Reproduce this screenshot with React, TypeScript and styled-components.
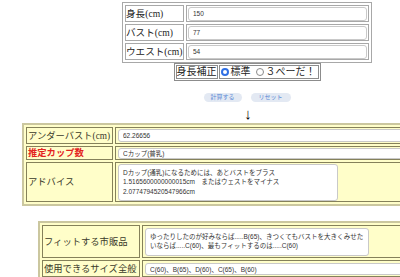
import styled, { createGlobalStyle } from "styled-components";

const GlobalStyle = createGlobalStyle`
  html, body {
    margin: 0;
    padding: 0;
    overflow: hidden;
    background: #ffffff;
  }
  body {
    font-family: "Liberation Serif", "Noto Sans CJK JP", serif;
  }
`;

const Page = styled.div`
  width: 494px;
  padding-top: 2px;
`;

const InputTable = styled.table`
  margin: 0 auto;
  width: 250px;
  border: 1px solid #a8a8a8;
  border-spacing: 2px;
`;

const GreyLabel = styled.td`
  width: 57px;
  height: 15px;
  padding: 0;
  border: 1px solid #a8a8a8;
  font-size: 9.6px;
  line-height: 15px;
  color: #222;
  white-space: nowrap;
`;

const GreyCell = styled.td`
  padding: 0 1px;
  border: 1px solid #a8a8a8;
`;

const Field = styled.input<{ $h?: number }>`
  display: block;
  box-sizing: border-box;
  width: 100%;
  height: ${(p) => p.$h ?? 14}px;
  padding: 0 4px;
  border: 1px solid #c9c9c9;
  border-radius: 3px;
  background: #fff;
  font: 6.5px "Liberation Sans", "Noto Sans CJK JP", sans-serif;
  color: #333;
  outline: none;
`;

const Memo = styled.textarea<{ $w: number; $h: number }>`
  display: block;
  box-sizing: border-box;
  width: ${(p) => p.$w}px;
  height: ${(p) => p.$h}px;
  padding: 3px 4px;
  border: 1px solid #c9c9c9;
  border-radius: 3px;
  background: #fff;
  font: 6.5px/9.5px "Liberation Sans", "Noto Sans CJK JP", sans-serif;
  color: #333;
  resize: none;
  overflow: hidden;
  outline: none;
`;

const RadioTable = styled.table`
  margin: 0 auto;
  border: 1px solid #8c8c8c;
  border-spacing: 1px;
`;

const RadioLabel = styled.td`
  height: 12px;
  padding: 0;
  border: 1px solid #8c8c8c;
  font-size: 10px;
  line-height: 12px;
  color: #222;
  white-space: nowrap;
`;

const RadioCell = styled.td`
  padding: 0 2px 0 1px;
  border: 1px solid #8c8c8c;
  font-size: 10px;
  line-height: 12px;
  color: #222;
  white-space: nowrap;
`;

const RadioGroup = styled.div`
  display: flex;
  align-items: center;
  gap: 2px;
`;

const RadioDot = styled.span<{ $on?: boolean }>`
  box-sizing: border-box;
  width: 8px;
  height: 8px;
  border-radius: 50%;
  border: ${(p) => (p.$on ? "2.5px solid #2f6fe4" : "1px solid #8a8a8a")};
  background: #fff;
  margin-left: ${(p) => (p.$on ? 0 : 3)}px;
`;

const ButtonRow = styled.div`
  display: flex;
  justify-content: center;
  gap: 9px;
  margin-top: 12px;
`;

const PillButton = styled.button<{ $w: number }>`
  width: ${(p) => p.$w}px;
  height: 9px;
  padding: 0;
  border: none;
  border-radius: 5px;
  background: #e3e9f3;
  color: #5d8ad6;
  font: 6px/9px "Liberation Sans", "Noto Sans CJK JP", sans-serif;
`;

const Arrow = styled.div`
  text-align: center;
  font: 15px/15px "Liberation Serif", "DejaVu Sans", serif;
  color: #000;
  margin-top: 5px;
  padding-left: 2px;
`;

const YellowTable = styled.table<{ $w: number; $top: number }>`
  width: ${(p) => p.$w}px;
  margin: ${(p) => p.$top}px auto 0;
  background: #fffec9;
  border: 2px solid #cbc79f;
  border-spacing: 2px;
`;

const YellowLabel = styled.td<{ $w: number; $h: number; $red?: boolean }>`
  width: ${(p) => p.$w}px;
  height: ${(p) => p.$h}px;
  padding: 0 1px;
  border: 1px solid #85815a;
  font-size: 9.3px;
  line-height: 12px;
  color: ${(p) => (p.$red ? "#e3231f" : "#3a3a2a")};
  font-weight: ${(p) => (p.$red ? 700 : 400)};
  white-space: nowrap;
`;

const YellowCell = styled.td`
  padding: 0 2px;
  border: 1px solid #85815a;
`;

export default function App() {
  return (
    <>
      <GlobalStyle />
      <Page>
        <InputTable>
          <tbody>
            <tr>
              <GreyLabel>身長(cm)</GreyLabel>
              <GreyCell>
                <Field readOnly value="150" />
              </GreyCell>
            </tr>
            <tr>
              <GreyLabel>バスト(cm)</GreyLabel>
              <GreyCell>
                <Field readOnly value="77" />
              </GreyCell>
            </tr>
            <tr>
              <GreyLabel>ウエスト(cm)</GreyLabel>
              <GreyCell>
                <Field readOnly value="54" />
              </GreyCell>
            </tr>
          </tbody>
        </InputTable>

        <RadioTable>
          <tbody>
            <tr>
              <RadioLabel>身長補正</RadioLabel>
              <RadioCell>
                <RadioGroup>
                  <RadioDot $on />
                  <span>標準</span>
                  <RadioDot />
                  <span>３ぺーだ！</span>
                </RadioGroup>
              </RadioCell>
            </tr>
          </tbody>
        </RadioTable>

        <ButtonRow>
          <PillButton $w={38}>計算する</PillButton>
          <PillButton $w={40}>リセット</PillButton>
        </ButtonRow>

        <Arrow>{"↓\uFE0E"}</Arrow>

        <YellowTable $w={450} $top={1}>
          <tbody>
            <tr>
              <YellowLabel $w={83} $h={15}>
                アンダーバスト(cm)
              </YellowLabel>
              <YellowCell>
                <Field readOnly value="62.26656" $h={13} />
              </YellowCell>
            </tr>
            <tr>
              <YellowLabel $w={83} $h={12} $red>
                推定カップ数
              </YellowLabel>
              <YellowCell>
                <Field readOnly value="Cカップ(普乳)" $h={11} />
              </YellowCell>
            </tr>
            <tr>
              <YellowLabel $w={83} $h={38}>
                アドバイス
              </YellowLabel>
              <YellowCell>
                <Memo
                  readOnly
                  $w={220}
                  $h={37}
                  value={
                    "Dカップ(通乳)になるためには、あとバストをプラス\n1.5165600000000015cm　またはウェストをマイナス\n2.0774794520547966cm"
                  }
                />
              </YellowCell>
            </tr>
          </tbody>
        </YellowTable>

        <YellowTable $w={418} $top={15}>
          <tbody>
            <tr>
              <YellowLabel $w={94} $h={31}>
                フィットする市販品
              </YellowLabel>
              <YellowCell>
                <Memo
                  readOnly
                  $w={224}
                  $h={28}
                  value={
                    "ゆったりしたのが好みならば.....B(65)、きつくてもバストを大きくみせたいならば.....C(60)、最もフィットするのは.....C(60)"
                  }
                />
              </YellowCell>
            </tr>
            <tr>
              <YellowLabel $w={94} $h={15}>
                使用できるサイズ全般
              </YellowLabel>
              <YellowCell>
                <Field readOnly value="C(60)、B(65)、D(60)、C(65)、B(60)" $h={12} />
              </YellowCell>
            </tr>
          </tbody>
        </YellowTable>
      </Page>
    </>
  );
}
